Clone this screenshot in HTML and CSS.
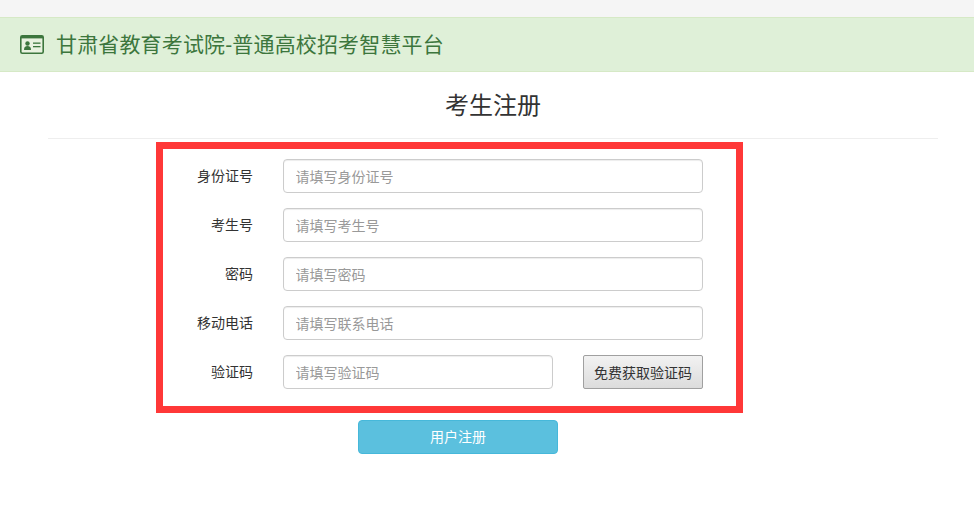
FILE: index.html
```html
<!DOCTYPE html>
<html lang="zh-CN">
	<head>
		<meta charset="UTF-8" />
		<meta name="viewport" content="width=device-width, initial-scale=1.0" />
		<title>考生注册</title>

		<link rel="stylesheet" href="styles.css">
	</head>
	<body>
		<div class="topBar"></div>

		<div class="notice">
			<svg class="cardIcon" width="24" height="19" viewBox="0 0 24 19">
				<rect x="0.8" y="0.8" width="22.4" height="17.4" rx="1.5" fill="#e9f2e0" stroke="#3c763d" stroke-width="1.6" />
				<rect x="1" y="1" width="22" height="2.4" fill="#3c763d" />
				<circle cx="7.5" cy="8.5" r="2.2" fill="#3c763d" />
				<path d="M4 15 C4 12 5.2 11 7.5 11 C9.8 11 11 12 11 15 Z" fill="#3c763d" />
				<rect x="13" y="7.5" width="7.5" height="1.3" fill="#3c763d" />
				<rect x="13" y="11" width="7.5" height="1.3" fill="#3c763d" />
			</svg>
			<span class="noticeTxt">甘肃省教育考试院-普通高校招考智慧平台</span>
		</div>

		<main>
			<h2>考生注册</h2>

			<form class="regForm">
				<div class="row">
					<label>身份证号</label>
					<input type="text" placeholder="请填写身份证号" />
				</div>
				<div class="row">
					<label>考生号</label>
					<input type="text" placeholder="请填写考生号" />
				</div>
				<div class="row">
					<label>密码</label>
					<input type="text" placeholder="请填写密码" />
				</div>
				<div class="row">
					<label>移动电话</label>
					<input type="text" placeholder="请填写联系电话" />
				</div>
				<div class="row">
					<label>验证码</label>
					<input class="short" type="text" placeholder="请填写验证码" />
					<button class="codeBtn" type="button">免费获取验证码</button>
				</div>
			</form>

			<button class="submitBtn" type="button">用户注册</button>
		</main>
	</body>
</html>
```

FILE: styles.css
```css
* {
	padding: 0;
	margin: 0;
	box-sizing: border-box;
}

body {
	font-family: "Liberation Sans", "Noto Sans CJK SC", sans-serif;
	font-size: 14px;
	color: #333;
	background: #fff;
}

.topBar {
	height: 17px;
	background-color: #f5f5f5;
}

.notice {
	display: flex;
	align-items: center;
	gap: 12px;
	height: 55px;
	padding: 0 0 1px 20px;
	font-size: 21px;
	color: #3c763d;
	background-color: #dff0d8;
	border-top: 1px solid #d6e9c6;
	border-bottom: 1px solid #d6e9c6;
}
.noticeTxt {
	padding-bottom: 3px;
	letter-spacing: 0.15px;
}

main {
	padding: 0 36px 0 48px;
}

h2 {
	height: 67px;
	padding-top: 18px;
	font-size: 24px;
	font-weight: 400;
	line-height: 32px;
	text-align: center;
	border-bottom: 1px solid #eee;
}

.regForm {
	display: flex;
	flex-direction: column;
	gap: 15px;
	width: 587px;
	height: 271px;
	margin: 3px 0 7px 108px;
	padding: 10px 0 0 0;
	border: 7px solid #ff3838;
}

.row {
	display: flex;
	align-items: center;
	height: 34px;
}

.row label {
	width: 90px;
	margin-right: 30px;
	font-size: 14px;
	text-align: right;
	line-height: 30px;
	padding-bottom: 1px;
}

.row input {
	width: 420px;
	height: 34px;
	padding: 2px 12px 0 11.5px;
	font-family: inherit;
	font-size: 14px;
	border: 1px solid #ccc;
	border-radius: 4px;
	box-shadow: inset 0 1px 1px rgba(0, 0, 0, 0.075);
}
.row input.short {
	width: 270px;
}
.row input::placeholder {
	color: #999;
}

.codeBtn {
	width: 120px;
	height: 34px;
	margin-left: 30px;
	font-family: inherit;
	font-size: 14px;
	color: #333;
	background: linear-gradient(#f2f2f2, #dcdcdc);
	border: 1px solid #a0a0a0;
	border-radius: 2px;
}

.submitBtn {
	display: block;
	width: 200px;
	height: 34px;
	margin-left: 310px;
	padding-bottom: 2px;
	font-family: inherit;
	font-size: 14px;
	color: #fff;
	background-color: #5bc0de;
	border: 1px solid #46b8da;
	border-radius: 4px;
}
```
